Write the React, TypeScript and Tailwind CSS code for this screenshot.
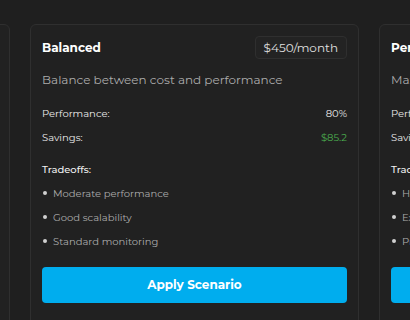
import React from "react";

type Scenario = {
  name: string;
  price: string;
  desc: string;
  perf: string;
  savings: string;
  tradeoffs: string[];
};

const scenarios: Scenario[] = [
  {
    name: "Cost Optimized",
    price: "$320/month",
    desc: "Minimize cost with acceptable performance",
    perf: "65%",
    savings: "$215.2",
    tradeoffs: ["Lower performance", "Limited scalability", "Basic monitoring"],
  },
  {
    name: "Balanced",
    price: "$450/month",
    desc: "Balance between cost and performance",
    perf: "80%",
    savings: "$85.2",
    tradeoffs: ["Moderate performance", "Good scalability", "Standard monitoring"],
  },
  {
    name: "Performance",
    price: "$680/month",
    desc: "Maximum performance and reliability",
    perf: "98%",
    savings: "$0",
    tradeoffs: ["Higher cost", "Excellent scalability", "Premium monitoring"],
  },
];

function Card({ s }: { s: Scenario }) {
  return (
    <div className="w-[329px] shrink-0 rounded-md border border-[#2f2f2f] bg-[#212121] px-[11px] pt-[11px] pb-6">
      <div className="flex h-[23px] items-center justify-between">
        <div className="text-[12px] font-bold text-white">{s.name}</div>
        <div className="flex h-[23px] items-center rounded border border-[#2f2f2f] bg-[#232323] px-[8px] text-[12px] text-[#e0e0e0]">
          {s.price}
        </div>
      </div>
      <div className="mt-[12px] text-[12px] leading-[18px] text-[#acacac] whitespace-nowrap">{s.desc}</div>
      <div className="mt-[16px] flex h-4 items-center justify-between text-[10px] text-[#ececec]">
        <span>Performance:</span>
        <span>{s.perf}</span>
      </div>
      <div className="mt-2 flex h-4 items-center justify-between text-[10px] text-[#ececec]">
        <span>Savings:</span>
        <span className="text-[#4caf50]">{s.savings}</span>
      </div>
      <div className="mt-4 flex h-4 items-center text-[10px] font-medium text-[#f0f0f0]">Tradeoffs:</div>
      <ul className="mt-2 flex flex-col gap-2">
        {s.tradeoffs.map((t) => (
          <li key={t} className="flex h-4 items-center text-[10px] text-[#acacac] whitespace-nowrap">
            <span className="ml-[1px] mr-[6px] h-[4px] w-[4px] shrink-0 rounded-full bg-[#d0d0d0]" />
            {t}
          </li>
        ))}
      </ul>
      <button className="mt-[18px] flex h-9 w-full items-center justify-center rounded bg-[#00adee] text-[12px] font-bold text-white">
        Apply Scenario
      </button>
    </div>
  );
}

export default function App() {
  return (
    <div
      className="h-[320px] w-[410px] overflow-hidden bg-[#1f1f1f]"
      style={{ fontFamily: "Montserrat, Inter, 'Noto Sans', sans-serif" }}
    >
      <div className="ml-[-319px] flex gap-5 pt-6">
        {scenarios.map((s) => (
          <Card key={s.name} s={s} />
        ))}
      </div>
    </div>
  );
}
